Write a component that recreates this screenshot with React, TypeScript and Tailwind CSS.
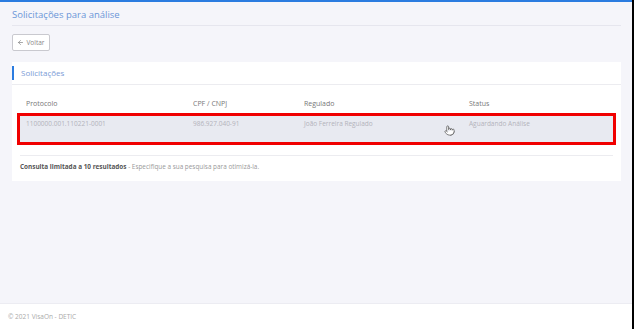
import React from "react";
import { ArrowLeft, Pointer } from "lucide-react";

const columns = [
  { label: "Protocolo", value: "1100000.001.110221-0001", width: "w-[167px]" },
  { label: "CPF / CNPJ", value: "986.927.040-91", width: "w-[111px]" },
  { label: "Regulado", value: "João Ferreira Regulado", width: "w-[165px]" },
  { label: "Status", value: "Aguardando Análise", width: "flex-1" },
] as const;

const App: React.FC = () => {
  return (
    <div
      className="flex h-[329px] w-[634px] flex-col overflow-hidden border-r-2 border-black bg-[#f5f5fa] text-[#777]"
      style={{ fontFamily: "'Open Sans', 'Liberation Sans', sans-serif" }}
    >
      <div className="h-[2px] w-full bg-[#2b7ce0]" />

      <main className="flex-1 pl-3 pr-[11px]">
        <div className="mt-[7px] border-b border-[#e6e6ee] pb-[4px]">
          <h1 className="text-[9.5px] leading-[12px] text-[#6b95d8]">
            Solicitações para análise
          </h1>
        </div>

        <button
          type="button"
          className="mt-[8px] flex h-[17px] w-[38px] items-center justify-center gap-[2px] rounded-[2px] border border-[#c9c9cf] bg-white text-[6.5px] text-[#888]"
        >
          <ArrowLeft size={7} strokeWidth={2.5} />
          Voltar
        </button>

        <section className="mt-[11px] bg-white pb-[9px]">
          <div className="flex h-[23px] items-center border-b border-[#ececf0]">
            <div className="h-[14px] w-[2px] bg-[#2b7ce0]" />
            <h2 className="ml-[7px] text-[8px] text-[#7a9bd6]">Solicitações</h2>
          </div>

          <div className="px-2 pt-[14px]">
            <div className="flex pb-[4px] pl-[6px] text-[7px] leading-[10px] text-[#777]">
              {columns.map((c) => (
                <span key={c.label} className={c.width}>
                  {c.label}
                </span>
              ))}
            </div>

            <div className="relative -mx-[3px] border-[3px] border-[#f00000]">
              <div className="flex h-[26px] items-start bg-[#e8eaf1] pl-[6px] pt-[3px] text-[6.5px] leading-[10px] text-[#b3b3bb]">
                {columns.map((c) => (
                  <span key={c.label} className={c.width}>
                    {c.value}
                  </span>
                ))}
              </div>
              <Pointer
                size={11}
                strokeWidth={1.5}
                className="absolute left-[424px] top-[9px] fill-white text-[#444]"
              />
            </div>

            <div className="mt-[10px] border-t border-[#ececf0] pt-[6px] text-[6.4px] leading-[10px] text-[#999]">
              <span className="font-bold text-[#555]">Consulta limitada a 10 resultados</span>
              {" - Especifique a sua pesquisa para otimizá-la."}
            </div>
          </div>
        </section>
      </main>

      <footer className="flex h-[26px] items-center border-t border-[#ececf2] bg-white pl-2 text-[6.5px] text-[#aaa]">
        © 2021 VisaOn - DETIC
      </footer>
    </div>
  );
};

export default App;
